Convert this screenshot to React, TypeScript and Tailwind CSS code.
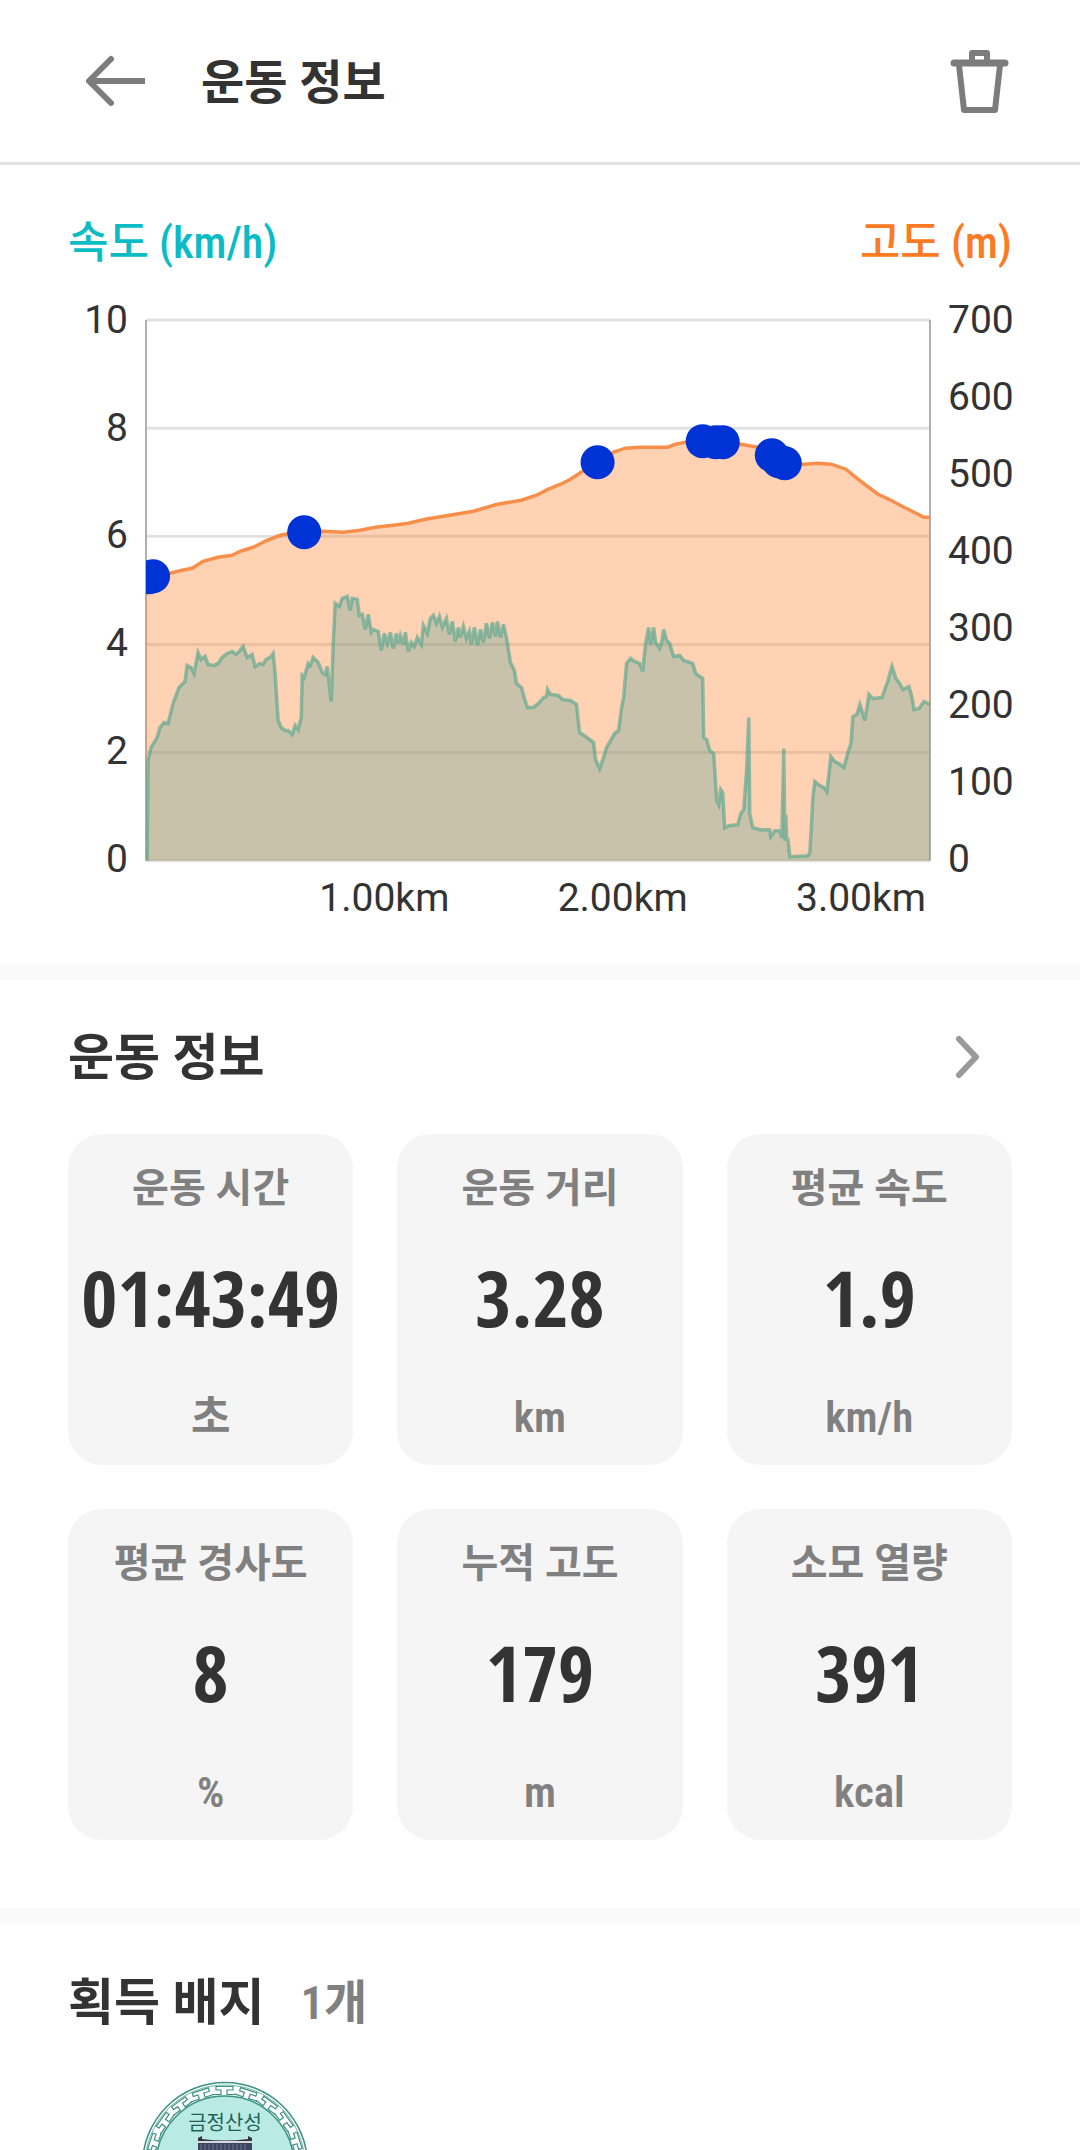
type Point = [number, number];

const CHART_WIDTH = 783;
const CHART_HEIGHT = 540;

const speedTicks = [10, 8, 6, 4, 2, 0];
const altitudeTicks = [700, 600, 500, 400, 300, 200, 100, 0];
const distanceTicks = ['1.00km', '2.00km', '3.00km'];

const altitude: Point[] = [
  [0, 256], [24, 253], [36, 250], [46, 248], [57, 241], [72, 237], [86, 235], [94, 231], [107, 227], [121, 220],
  [134, 215], [144, 213], [158, 212], [176, 211], [197, 212], [214, 210], [229, 207], [247, 205], [262, 203],
  [279, 199], [303, 195], [327, 191], [351, 184], [375, 180], [390, 175], [402, 169], [414, 164], [424, 159],
  [436, 151], [451, 142], [467, 132], [479, 128], [494, 127], [521, 127], [529, 124], [539, 122], [554, 121],
  [577, 122], [594, 124], [611, 127], [627, 135], [639, 143], [657, 144], [671, 143], [684, 144], [699, 149],
  [711, 159], [731, 174], [742, 179], [757, 187], [767, 192], [777, 197], [783, 197],
];

const speed: Point[] = [
  [1, 540], [2, 440], [5, 427], [11, 417], [14, 407], [18, 402], [22, 403], [27, 383], [33, 367], [39, 361],
  [41, 345], [45, 347], [48, 353], [52, 332], [55, 339], [59, 336], [62, 344], [68, 345], [72, 343], [76, 337],
  [81, 333], [86, 331], [90, 334], [94, 330], [97, 326], [101, 337], [106, 334], [109, 346], [114, 343],
  [117, 344], [120, 339], [124, 337], [127, 333], [129, 353], [132, 400], [135, 407], [139, 410], [142, 410],
  [146, 414], [149, 405], [152, 409], [155, 397], [156, 355], [158, 357], [162, 343], [164, 345], [167, 337],
  [172, 342], [176, 352], [179, 354], [181, 346], [185, 381], [187, 323], [189, 283], [193, 286], [196, 278],
  [201, 276], [204, 290], [206, 278], [211, 279], [213, 295], [216, 294], [219, 309], [222, 294], [225, 312],
  [227, 309], [232, 311], [235, 330], [238, 313], [241, 323], [244, 312], [247, 328], [250, 313], [252, 323],
  [254, 315], [257, 324], [259, 312], [262, 331], [265, 322], [268, 326], [271, 317], [275, 324], [277, 305],
  [281, 313], [284, 298], [287, 295], [290, 303], [293, 296], [296, 307], [300, 298], [303, 314], [306, 301],
  [309, 321], [312, 307], [314, 317], [317, 306], [320, 318], [323, 311], [325, 324], [328, 307], [331, 325],
  [334, 309], [337, 322], [340, 303], [343, 318], [346, 302], [349, 316], [351, 301], [354, 317], [357, 304],
  [360, 317], [364, 342], [368, 350], [370, 363], [375, 367], [378, 378], [381, 387], [387, 387], [392, 383],
  [397, 377], [400, 376], [401, 369], [404, 374], [412, 375], [416, 379], [424, 380], [430, 384], [433, 412],
  [439, 416], [447, 422], [449, 439], [453, 448], [457, 437], [460, 427], [464, 420], [468, 413], [472, 410],
  [475, 387], [477, 377], [480, 343], [484, 338], [488, 341], [493, 343], [496, 351], [499, 323], [502, 307],
  [504, 324], [507, 307], [509, 322], [513, 328], [515, 322], [517, 309], [520, 320], [523, 323], [527, 336],
  [533, 335], [537, 340], [546, 343], [549, 353], [556, 358], [557, 417], [560, 419], [563, 430], [567, 433],
  [570, 480], [572, 484], [574, 469], [576, 472], [578, 507], [582, 505], [591, 504], [594, 493], [597, 489],
  [600, 447], [602, 397], [603, 493], [606, 507], [614, 509], [623, 509], [624, 516], [628, 510], [633, 510],
  [635, 517], [637, 428], [638, 520], [639, 494], [640, 520], [641, 517], [643, 536], [661, 535], [663, 532],
  [666, 477], [668, 461], [673, 465], [677, 467], [680, 471], [684, 436], [688, 441], [692, 443], [697, 447],
  [701, 432], [704, 423], [706, 396], [710, 394], [713, 384], [718, 400], [722, 374], [726, 378], [735, 377],
  [741, 360], [745, 346], [749, 358], [752, 362], [756, 369], [762, 366], [765, 377], [767, 389], [772, 388],
  [777, 381], [783, 384],
];

const markers: Point[] = [
  [3, 257], [7, 256], [158, 212], [451, 142], [556, 121], [569, 122], [576, 122], [625, 135], [632, 141], [638, 143],
];

const stats = [
  { label: '운동 시간', value: '01:43:49', unit: '초' },
  { label: '운동 거리', value: '3.28', unit: 'km' },
  { label: '평균 속도', value: '1.9', unit: 'km/h' },
  { label: '평균 경사도', value: '8', unit: '%' },
  { label: '누적 고도', value: '179', unit: 'm' },
  { label: '소모 열량', value: '391', unit: 'kcal' },
];

const toLine = (points: Point[]) => points.map(([x, y], i) => `${i === 0 ? 'M' : 'L'}${x} ${y}`).join(' ');
const toArea = (points: Point[]) => `${toLine(points)} V${CHART_HEIGHT} H0 Z`;

function Header() {
  return (
    <header className="flex shrink-0 items-center border-b-3 border-[#e2e2e2] px-[68px] py-12">
      <button type="button" aria-label="뒤로" className="pl-4">
        <svg width="64" height="66" viewBox="0 0 64 66" fill="none" stroke="#7c7c7c" strokeWidth="6">
          <path d="M61 33H5" />
          <path d="M27 11L5 33L27 55" strokeLinecap="round" strokeLinejoin="round" />
        </svg>
      </button>
      <h1 className="ml-[53px] pt-1 text-[47px] leading-[62px] font-bold">운동 정보</h1>
      <button type="button" aria-label="삭제" className="ml-auto">
        <svg width="64" height="66" viewBox="0 0 64 66" fill="none" stroke="#7c7c7c" strokeWidth="6" strokeLinejoin="round">
          <path d="M6 15H57" strokeWidth="7" strokeLinecap="round" />
          <path d="M24 13V5H39V13" />
          <path d="M11 17L16 62H47L52 17" />
        </svg>
      </button>
    </header>
  );
}

function Chart() {
  return (
    <svg viewBox={`0 0 ${CHART_WIDTH} ${CHART_HEIGHT}`} className="block w-full overflow-visible" role="img" aria-label="속도와 고도 그래프">
      <defs>
        <clipPath id="plot">
          <rect width={CHART_WIDTH} height={CHART_HEIGHT} />
        </clipPath>
      </defs>
      {speedTicks.map((tick) => {
        const y = CHART_HEIGHT - tick * 54;
        return <path key={tick} d={`M0 ${y}H${CHART_WIDTH}`} stroke="#e2e2e2" strokeWidth="3" />;
      })}
      <path d={`M0 0V${CHART_HEIGHT}M${CHART_WIDTH} 0V${CHART_HEIGHT}`} stroke="#b0b0b0" strokeWidth="2" />
      <g clipPath="url(#plot)">
        <path d={toArea(altitude)} fill="#ff7d27" fillOpacity="0.35" />
        <path d={toLine(altitude)} fill="none" stroke="#f78f4a" strokeWidth="3.5" />
        <path d={toArea(speed)} fill="#5fa796" fillOpacity="0.35" />
        <path d={toLine(speed)} fill="none" stroke="#4ba48d" strokeOpacity="0.6" strokeWidth="3.5" />
        {markers.map(([x, y]) => (
          <circle key={x} cx={x} cy={y} r="17" fill="#0033d6" />
        ))}
      </g>
    </svg>
  );
}

function ChartSection() {
  return (
    <section className="px-[68px] pt-[54px] pb-[45px]">
      <div className="flex justify-between font-['Roboto_Condensed','Noto_Sans_CJK_KR',sans-serif] text-[44px] leading-[48px] font-medium">
        <h2 className="text-[#0bbcc6]">속도 (km/h)</h2>
        <h2 className="text-[#fb7a24]">고도 (m)</h2>
      </div>
      <div className="mt-[53px] grid grid-cols-[60px_1fr_64px] text-[39px] leading-10">
        <ul className="-mt-5 -mb-[18px] flex flex-col justify-between text-right">
          {speedTicks.map((tick) => (
            <li key={tick}>{tick}</li>
          ))}
        </ul>
        <div className="mx-[18px]">
          <Chart />
        </div>
        <ul className="-mt-5 -mb-[18px] flex flex-col justify-between">
          {altitudeTicks.map((tick) => (
            <li key={tick}>{tick}</li>
          ))}
        </ul>
        <ul className="col-start-2 mx-[18px] mt-[17px] flex">
          {distanceTicks.map((tick) => (
            <li key={tick} className="w-[30.4%] shrink-0 translate-x-1/2 text-center">
              {tick}
            </li>
          ))}
        </ul>
      </div>
    </section>
  );
}

function StatCard({ label, value, unit }: (typeof stats)[number]) {
  return (
    <div className="rounded-[34px] bg-[#f5f5f5] pt-[35px] pb-7 text-center">
      <dt className="text-[40px] leading-10 font-bold text-[#808080]">{label}</dt>
      <dd className="mt-12 font-['Open_Sans_Condensed','Roboto_Condensed',sans-serif] text-[78px] leading-20 font-bold">
        {value}
      </dd>
      <dd className="mt-[60px] font-['Roboto_Condensed','Noto_Sans_CJK_KR',sans-serif] text-[43px] leading-10 font-semibold text-[#808080]">
        {unit}
      </dd>
    </div>
  );
}

function StatsSection() {
  return (
    <section className="px-[68px] pt-12 pb-[68px]">
      <div className="flex items-center justify-between">
        <h2 className="text-[50px] leading-[60px] font-bold">운동 정보</h2>
        <button type="button" aria-label="운동 정보 상세" className="pr-7">
          <svg width="30" height="48" viewBox="0 0 30 48" fill="none" stroke="#9a9a9a" strokeWidth="6" strokeLinecap="round" strokeLinejoin="round">
            <path d="M5 5L22 23L5 41" />
          </svg>
        </button>
      </div>
      <dl className="mt-[46px] grid grid-cols-3 gap-11">
        {stats.map((stat) => (
          <StatCard key={stat.label} {...stat} />
        ))}
      </dl>
    </section>
  );
}

function Badge() {
  const keys = Array.from({ length: 20 }, (_, i) => i * 18);
  const tiles = Array.from({ length: 12 }, (_, i) => 60 + i * 4);

  return (
    <svg width="168" height="168" viewBox="0 0 168 168" role="img" aria-label="금정산성 배지">
      <circle cx="84" cy="84" r="82.5" fill="#ffffff" stroke="#3c9184" strokeWidth="1.5" />
      <circle cx="84" cy="84" r="80" fill="none" stroke="#6fb3a8" strokeWidth="1" />
      {/* Meander border */}
      {keys.map((angle) => (
        <path
          key={angle}
          d="M71 13.5H80V9H75V5.5H92V9H86V13.5H95"
          transform={`rotate(${angle} 84 84)`}
          fill="none"
          stroke="#3c9184"
          strokeWidth="1.2"
        />
      ))}
      <circle cx="84" cy="84" r="69" fill="#b9ebe4" stroke="#3c9184" strokeWidth="1.5" />
      <text x="84" y="49" textAnchor="middle" fontSize="20" fill="#1f6357">
        금정산성
      </text>
      {/* Fortress gate */}
      <path d="M57 60V57L61 55V58Q84 61 107 58V55L111 57V60Z" fill="#33363c" />
      <rect x="57" y="60" width="54" height="3" fill="#d5dadf" />
      <rect x="57" y="62" width="54" height="24" fill="#3d4660" />
      {tiles.map((x) => (
        <path key={x} d={`M${x} 63V86`} stroke="#6d7488" strokeWidth="1" />
      ))}
      <path d="M50 86H118L124 94H44Z" fill="#33363c" />
      <rect x="56" y="94" width="56" height="26" fill="#c98d68" />
      <path d="M76 120V108A8 8 0 0 1 92 108V120Z" fill="#33363c" />
    </svg>
  );
}

function BadgeSection() {
  return (
    <section className="px-[68px] pt-12">
      <div className="flex items-center gap-9">
        <h2 className="text-[50px] leading-[60px] font-bold">획득 배지</h2>
        <span className="font-['Roboto_Condensed','Noto_Sans_CJK_KR',sans-serif] text-[47px] leading-[60px] font-semibold text-[#808080]">
          1개
        </span>
      </div>
      <div className="mt-12 pl-[73px]">
        <Badge />
      </div>
    </section>
  );
}

export default function App() {
  return (
    <div className="flex h-screen flex-col bg-white font-['Roboto','Noto_Sans_CJK_KR',sans-serif] text-[#333333]">
      <Header />
      <main className="min-h-0 flex-1 overflow-y-auto [scrollbar-width:none]">
        <ChartSection />
        <div className="h-[17px] bg-[#fafafa]" />
        <StatsSection />
        <div className="h-[17px] bg-[#fafafa]" />
        <BadgeSection />
      </main>
    </div>
  );
}
